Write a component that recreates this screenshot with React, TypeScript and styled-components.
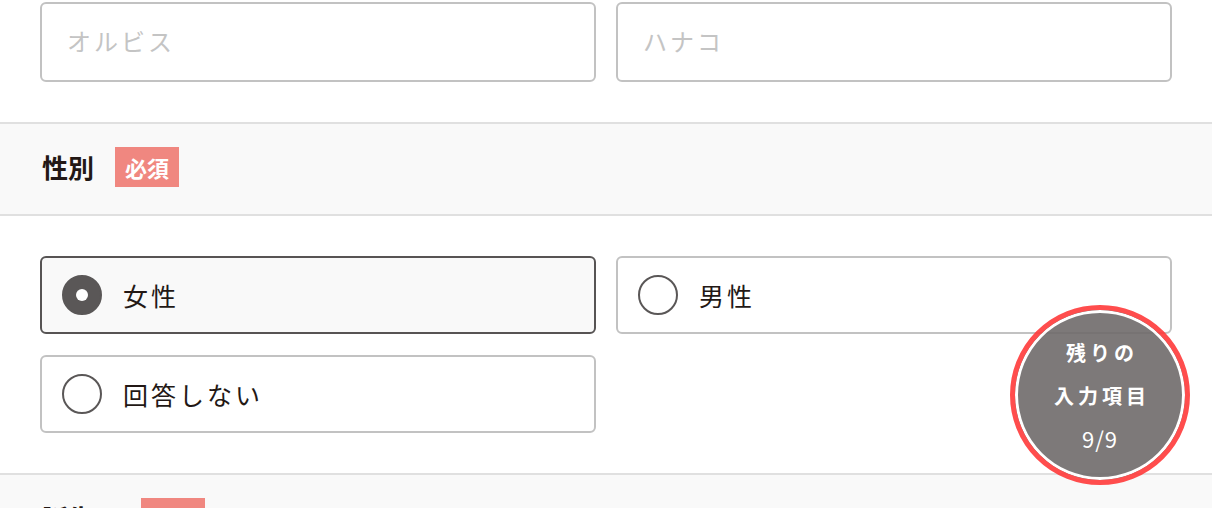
import styled, { createGlobalStyle } from 'styled-components';

const GlobalStyle = createGlobalStyle`
  html, body {
    margin: 0;
    padding: 0;
    background: #fff;
    font-family: "Noto Sans CJK JP", "Noto Sans", sans-serif;
    color: #333;
    overflow: hidden;
  }
`;

const Page = styled.div`
  width: 1212px;
  height: 508px;
  overflow: hidden;
`;

const FieldBody = styled.div<{ $top?: number }>`
  padding: ${(p) => p.$top ?? 40}px 40px 40px;
`;

const InputRow = styled.div`
  display: grid;
  grid-template-columns: 1fr 1fr;
  gap: 20px;
`;

const TextInput = styled.input`
  box-sizing: border-box;
  height: 80px;
  width: 100%;
  padding: 0 25px 4px;
  border: 2px solid #c2c2c2;
  border-radius: 6px;
  font-family: inherit;
  font-size: 24px;
  letter-spacing: 3px;
  color: #333;
  background: #fff;
  outline: none;

  &::placeholder {
    color: #c4c4c4;
  }
`;

const SectionHead = styled.div`
  display: flex;
  align-items: flex-start;
  gap: 21px;
  height: 94px;
  box-sizing: border-box;
  padding: 23px 42px 0;
  background: #f9f9f9;
  border-top: 2px solid #e0e0e0;
  border-bottom: 2px solid #e0e0e0;
`;

const HeadLabel = styled.span`
  font-size: 26px;
  font-weight: 700;
  line-height: 40px;
  color: #231815;
`;

const Required = styled.span`
  display: inline-flex;
  align-items: center;
  justify-content: center;
  width: 64px;
  height: 40px;
  background: #f08780;
  color: #fff;
  font-size: 22px;
  font-weight: 700;
`;

const RadioGrid = styled.div`
  display: grid;
  grid-template-columns: 1fr 1fr;
  column-gap: 20px;
  row-gap: 21px;
`;

const RadioBox = styled.label<{ $checked?: boolean }>`
  box-sizing: border-box;
  height: 78px;
  display: flex;
  align-items: center;
  gap: 21px;
  padding: 0 20px;
  border: 2px solid ${(p) => (p.$checked ? '#575454' : '#c2c2c2')};
  border-radius: 6px;
  background: ${(p) => (p.$checked ? '#f9f9f9' : '#fff')};
  cursor: pointer;
`;

const RadioMark = styled.span<{ $checked?: boolean }>`
  box-sizing: border-box;
  width: 40px;
  height: 40px;
  border-radius: 50%;
  flex-shrink: 0;
  position: relative;
  border: 2px solid #5a5757;
  background: ${(p) => (p.$checked ? '#5a5757' : '#fff')};

  &::after {
    content: '';
    display: ${(p) => (p.$checked ? 'block' : 'none')};
    position: absolute;
    left: 50%;
    top: 50%;
    width: 12px;
    height: 12px;
    margin: -6px 0 0 -6px;
    border-radius: 50%;
    background: #fff;
  }
`;

const RadioText = styled.span`
  font-size: 25px;
  letter-spacing: 3px;
  color: #231815;
`;

const Remaining = styled.div`
  position: fixed;
  right: 22px;
  bottom: 23px;
  width: 180px;
  height: 180px;
  box-sizing: border-box;
  border-radius: 50%;
  border: 5px solid #ff3a3a;
  box-shadow: inset 0 0 0 3px #fff;
  background: #6f6b6b;
  opacity: 0.9;
  display: flex;
  flex-direction: column;
  align-items: center;
  justify-content: center;
  color: #fff;
`;

const RemainLine = styled.span<{ $count?: boolean }>`
  font-size: ${(p) => (p.$count ? 22 : 20)}px;
  font-weight: ${(p) => (p.$count ? 400 : 700)};
  letter-spacing: ${(p) => (p.$count ? 1 : 4)}px;
  margin-right: ${(p) => (p.$count ? 0 : -4)}px;
  line-height: 43px;
`;

const genders = [
  { label: '女性', checked: true },
  { label: '男性', checked: false },
  { label: '回答しない', checked: false },
];

export default function App() {
  return (
    <Page>
      <GlobalStyle />
      <FieldBody $top={2}>
        <InputRow>
          <TextInput placeholder="オルビス" />
          <TextInput placeholder="ハナコ" />
        </InputRow>
      </FieldBody>

      <SectionHead>
        <HeadLabel>性別</HeadLabel>
        <Required>必須</Required>
      </SectionHead>

      <FieldBody>
        <RadioGrid>
          {genders.map((g) => (
            <RadioBox key={g.label} $checked={g.checked}>
              <RadioMark $checked={g.checked} />
              <RadioText>{g.label}</RadioText>
            </RadioBox>
          ))}
        </RadioGrid>
      </FieldBody>

      <SectionHead>
        <HeadLabel>誕生日</HeadLabel>
        <Required>必須</Required>
      </SectionHead>

      <Remaining>
        <RemainLine>残りの</RemainLine>
        <RemainLine>入力項目</RemainLine>
        <RemainLine $count>9/9</RemainLine>
      </Remaining>
    </Page>
  );
}
